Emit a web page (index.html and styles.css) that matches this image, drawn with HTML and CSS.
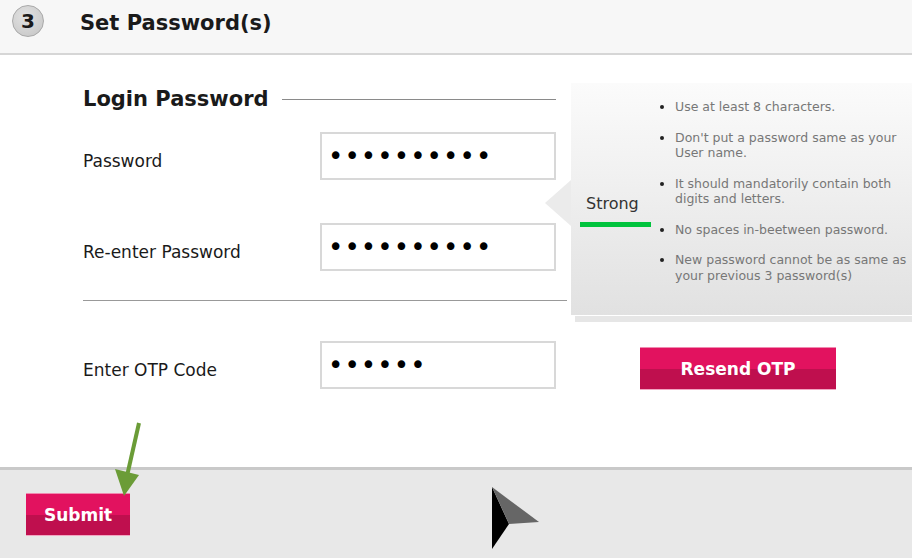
FILE: index.html
```html
<!DOCTYPE html>
<html lang="en">
<head>
  <meta charset="UTF-8" />
  <meta name="viewport" content="width=device-width, initial-scale=1" />
  <title>Set Password(s)</title>
  <link rel="stylesheet" href="styles.css">
</head>
<body>
  <header class="step-head">
    <span class="step-num">3</span>
    <h1 class="step-title">Set Password(s)</h1>
  </header>

  <main class="step-body">
    <form class="pw-form">
      <div class="section-title">
        <h2>Login Password</h2>
        <span class="rule"></span>
      </div>

      <div class="field">
        <label for="pw">Password</label>
        <input type="password" id="pw" value="abcdefghij" readonly />
      </div>

      <div class="field field-gap">
        <label for="pw2">Re-enter Password</label>
        <input type="password" id="pw2" value="abcdefghij" readonly />
      </div>

      <hr class="divider" />

      <div class="field">
        <label for="otp">Enter OTP Code</label>
        <input type="password" id="otp" value="123456" readonly />
      </div>
    </form>

    <aside class="pw-side">
      <div class="hint-box">
        <div class="strength">
          <span class="strength-label">Strong</span>
          <span class="strength-bar"></span>
        </div>
        <ul class="rules">
          <li>Use at least 8 characters.</li>
          <li>Don't put a password same as your<br>User name.</li>
          <li>It should mandatorily contain both<br>digits and letters.</li>
          <li>No spaces in-beetween password.</li>
          <li>New password cannot be as same as<br>your previous 3 password(s)</li>
        </ul>
      </div>
      <div class="hint-shadow"></div>
      <button type="button" class="btn btn-resend">Resend OTP</button>
    </aside>
  </main>

  <footer class="step-foot">
    <button type="button" class="btn btn-submit">Submit</button>
  </footer>

  <!-- annotation arrow pointing at submit -->
  <svg class="note-arrow" width="40" height="80" viewBox="0 0 40 80">
    <line x1="34" y1="3" x2="22" y2="56" stroke="#6b9c37" stroke-width="4" />
    <polygon points="10,49 34,55 19,76" fill="#6b9c37" />
  </svg>

  <svg class="cursor" width="50" height="64" viewBox="0 0 50 64">
    <polygon points="1,1 18,38 1,63" fill="#000" />
    <polygon points="1,1 48,36 18,38" fill="#666" />
  </svg>
</body>
</html>
```

FILE: styles.css
```css
body {
  margin: 0;
  width: 912px;
  height: 558px;
  overflow: hidden;
  position: relative;
  font-family: 'DejaVu Sans', Verdana, sans-serif;
  color: #1a1a1a;
  background: #fff;
  display: flex;
  flex-direction: column;
}

/* header */
.step-head {
  height: 55px;
  box-sizing: border-box;
  padding: 5px 12px 0;
  display: flex;
  align-items: flex-start;
  background: #f7f7f7;
  border-bottom: 2px solid #d6d6d6;
  flex: none;
}

.step-num {
  width: 30px;
  height: 30px;
  border-radius: 50%;
  border: 1px solid #a9a9a9;
  background: radial-gradient(circle at 40% 35%, #e2e2e2, #c4c4c4);
  display: flex;
  align-items: center;
  justify-content: center;
  font-weight: bold;
  font-size: 20px;
  color: #1a1a1a;
}

.step-title {
  margin: 2px 0 0 36px;
  font-size: 21px;
  line-height: 32px;
  font-weight: bold;
}

/* body */
.step-body {
  height: 412px;
  box-sizing: border-box;
  padding-top: 28px;
  display: flex;
  flex: none;
}

.pw-form {
  width: 484px;
  margin-left: 83px;
  flex: none;
}

.section-title {
  width: 473px;
  height: 32px;
  display: flex;
  align-items: center;
}

.section-title h2 {
  margin: 0;
  font-size: 21px;
  font-weight: bold;
}

.section-title .rule {
  flex: 1;
  margin-left: 13px;
  border-top: 1px solid #8a8a8a;
}

.field {
  display: flex;
  align-items: center;
  margin-top: 17px;
  height: 48px;
}

.field-gap {
  margin-top: 43px;
}

.field label {
  width: 237px;
  padding-top: 10px;
  font-size: 17px;
  color: #1a1a1a;
}

.field input {
  width: 236px;
  height: 48px;
  box-sizing: border-box;
  border: 2px solid #d8d8d8;
  padding: 0 0 0 6px;
  font-family: 'DejaVu Sans', sans-serif;
  font-size: 26px;
  letter-spacing: 1.1px;
  color: #000;
  background: #fff;
  outline: none;
}

.divider {
  margin: 29px 0 0;
  border: 0;
  border-top: 1px solid #999;
}

.divider + .field {
  margin-top: 40px;
}

/* side hints */
.pw-side {
  flex: 1;
  margin-left: 4px;
}

.hint-box {
  position: relative;
  height: 232px;
  display: flex;
  background: linear-gradient(#fbfbfb, #e1e1e1);
}

.hint-box::before {
  content: "";
  position: absolute;
  left: -26px;
  top: 97px;
  width: 26px;
  height: 46px;
  background: #ebebeb;
  clip-path: polygon(100% 0, 0 50%, 100% 100%);
}

.strength {
  width: 89px;
  flex: none;
  display: flex;
  flex-direction: column;
  padding-top: 111px;
  box-sizing: border-box;
}

.strength-label {
  font-size: 16px;
  line-height: 20px;
  color: #333;
  margin-left: 15px;
}

.strength-bar {
  margin: 8px 0 0 9px;
  width: 71px;
  height: 5px;
  background: #00c33d;
}

.rules {
  list-style: none;
  margin: 0;
  padding: 16px 0 0;
  font-size: 12.5px;
  line-height: 15.5px;
  color: #777;
  white-space: nowrap;
}

.rules li {
  display: flex;
  margin-bottom: 15px;
}

.rules li::before {
  content: "";
  flex: none;
  width: 4px;
  height: 4px;
  border-radius: 50%;
  background: #222;
  margin: 6px 11px 0 0;
}

.hint-shadow {
  margin: 1px 0 0 4px;
  height: 6px;
  background: #e6e6e6;
}

/* buttons */
.btn {
  border: none;
  border-top: 1px solid #f08ab0;
  border-bottom: 1px solid #f2a6c2;
  background: linear-gradient(#e2125f 0, #e2125f 50%, #bf0f4e 50%, #bf0f4e 100%);
  color: #fff;
  font-family: 'DejaVu Sans', sans-serif;
  font-weight: bold;
  font-size: 17px;
  padding: 0;
  cursor: pointer;
}

.btn-resend {
  display: block;
  margin: 25px 0 0 69px;
  width: 196px;
  height: 43px;
}

.btn-submit {
  width: 104px;
  height: 43px;
}

/* footer */
.step-foot {
  flex: 1;
  background: #e8e8e8;
  border-top: 3px solid #c9c9c9;
  padding: 23px 0 0 26px;
}

/* overlays */
.note-arrow {
  position: absolute;
  left: 105px;
  top: 420px;
}

.cursor {
  position: absolute;
  left: 491px;
  top: 486px;
}
```
